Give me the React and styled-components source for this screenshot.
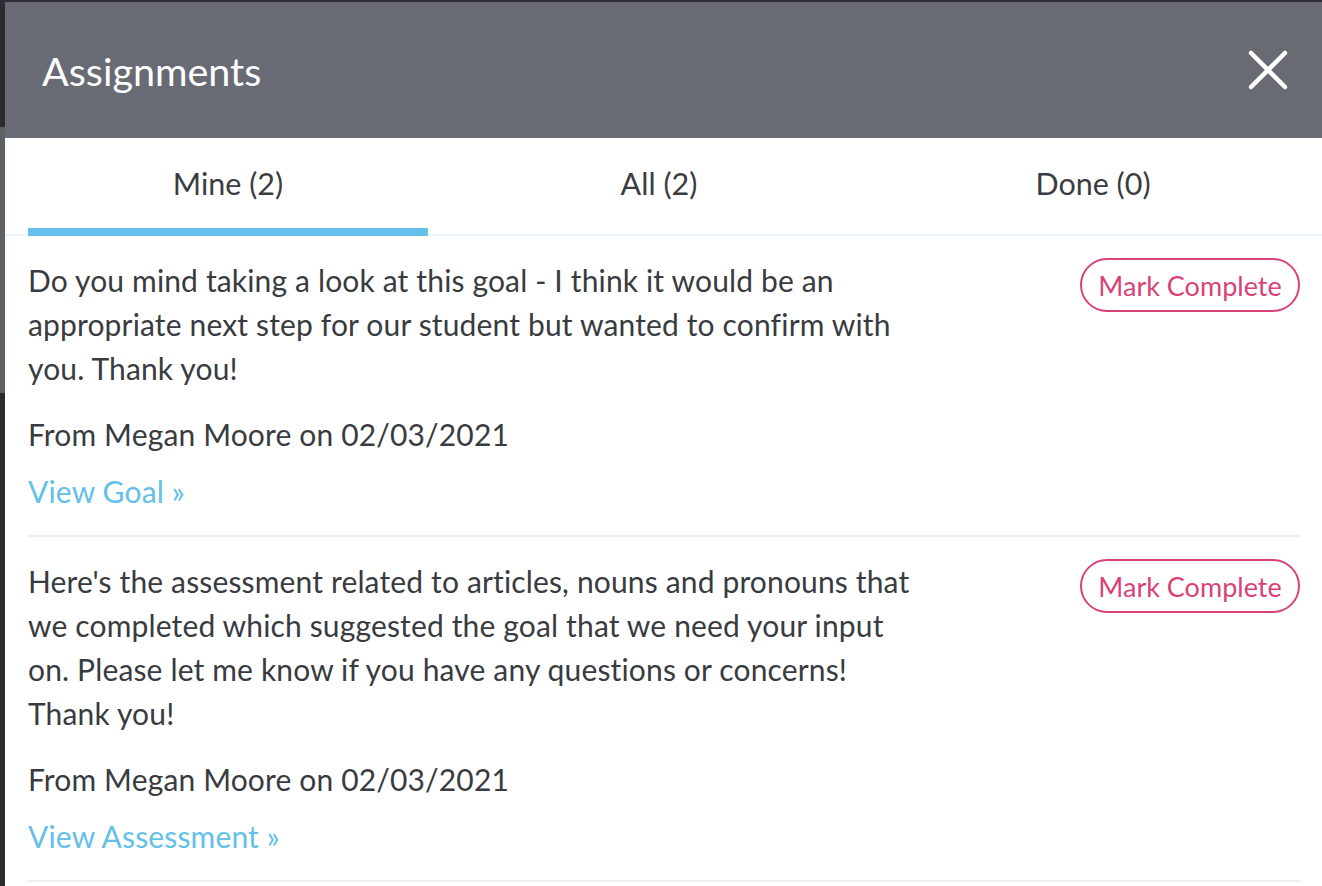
import React, { useState } from "react";
import styled, { createGlobalStyle } from "styled-components";

const GlobalStyle = createGlobalStyle`
  html, body {
    margin: 0;
    padding: 0;
    background: #2b2c30;
    font-family: Lato, "Open Sans", sans-serif;
  }
  * { box-sizing: border-box; }
`;

const Screen = styled.div`
  display: flex;
  min-height: 886px;
  padding-top: 2px;
  overflow: hidden;
`;

// sliver of the dimmed page that shows beside the drawer
const PageEdge = styled.div`
  width: 5px;
  flex-shrink: 0;
  display: flex;
  flex-direction: column;
`;

const PageEdgeBlock = styled.div`
  margin-top: 125px;
  height: 266px;
  background: #5b6261;
`;

const Drawer = styled.section`
  flex: 1;
  background: #ffffff;
  display: flex;
  flex-direction: column;
`;

const Header = styled.header`
  height: 136px;
  background: #686b73;
  display: flex;
  align-items: center;
  justify-content: space-between;
  padding: 0 34px 0 37px;
`;

const Title = styled.h1`
  margin: 0;
  font-size: 39.5px;
  font-weight: 400;
  color: #ffffff;
`;

const CloseButton = styled.button`
  width: 40px;
  height: 40px;
  padding: 0;
  border: 0;
  background: transparent;
  cursor: pointer;
  display: flex;
  align-items: center;
  justify-content: center;
`;

const TabBar = styled.nav`
  display: grid;
  grid-template-columns: 400px 462px 406px;
  padding-left: 23px;
  box-shadow: inset 0 -2px 0 #eaf6fc;
`;

const Tab = styled.button`
  border: 0;
  background: transparent;
  padding: 23px 0;
  border-bottom: 8px solid ${(p) => (p.$active ? "#66c1ea" : "transparent")};
  font-family: inherit;
  font-size: 30.5px;
  line-height: 44px;
  color: #3a3c41;
  cursor: pointer;
`;

const List = styled.div`
  padding: 0 22px 0 23px;
`;

const Item = styled.article`
  display: flex;
  align-items: flex-start;
  justify-content: space-between;
  padding: 22px 0;
  border-bottom: 2px solid #efefef;
`;

const Body = styled.div`
  width: 895px;
`;

const Message = styled.p`
  margin: 0 0 22px;
  font-size: 30px;
  line-height: 44px;
  letter-spacing: 0.15px;
  color: #383b40;
`;

const Meta = styled.p`
  margin: 0 0 13px;
  font-size: 30px;
  line-height: 44px;
  letter-spacing: 0.15px;
  color: #383b40;
`;

const ViewLink = styled.a`
  display: block;
  font-size: 30px;
  line-height: 44px;
  letter-spacing: 0.15px;
  color: #64bfe9;
  text-decoration: none;
  cursor: pointer;
`;

const CompleteButton = styled.button`
  flex-shrink: 0;
  width: 220px;
  height: 54px;
  padding: 0;
  border: 2px solid #d84279;
  border-radius: 27px;
  background: #ffffff;
  color: #d84279;
  font-family: inherit;
  font-size: 27px;
  cursor: pointer;
`;

const assignments = [
  {
    id: 1,
    message:
      "Do you mind taking a look at this goal - I think it would be an appropriate next step for our student but wanted to confirm with you. Thank you!",
    from: "Megan Moore",
    date: "02/03/2021",
    link: "View Goal »",
  },
  {
    id: 2,
    message:
      "Here's the assessment related to articles, nouns and pronouns that we completed which suggested the goal that we need your input on. Please let me know if you have any questions or concerns! Thank you!",
    from: "Megan Moore",
    date: "02/03/2021",
    link: "View Assessment »",
  },
];

const tabs = [
  { key: "mine", label: "Mine (2)" },
  { key: "all", label: "All (2)" },
  { key: "done", label: "Done (0)" },
];

export default function App() {
  const [tab, setTab] = useState("mine");

  return (
    <>
      <GlobalStyle />
      <Screen>
        <PageEdge>
          <PageEdgeBlock />
        </PageEdge>
        <Drawer>
          <Header>
            <Title>Assignments</Title>
            <CloseButton aria-label="Close">
              <svg width="40" height="40" viewBox="0 0 40 40">
                <path
                  d="M3 3 L37 37 M37 3 L3 37"
                  stroke="#ffffff"
                  strokeWidth="4.5"
                  strokeLinecap="round"
                />
              </svg>
            </CloseButton>
          </Header>
          <TabBar>
            {tabs.map((t) => (
              <Tab key={t.key} $active={tab === t.key} onClick={() => setTab(t.key)}>
                {t.label}
              </Tab>
            ))}
          </TabBar>
          <List>
            {assignments.map((a) => (
              <Item key={a.id}>
                <Body>
                  <Message>{a.message}</Message>
                  <Meta>
                    From {a.from} on {a.date}
                  </Meta>
                  <ViewLink>{a.link}</ViewLink>
                </Body>
                <CompleteButton>Mark Complete</CompleteButton>
              </Item>
            ))}
          </List>
        </Drawer>
      </Screen>
    </>
  );
}
